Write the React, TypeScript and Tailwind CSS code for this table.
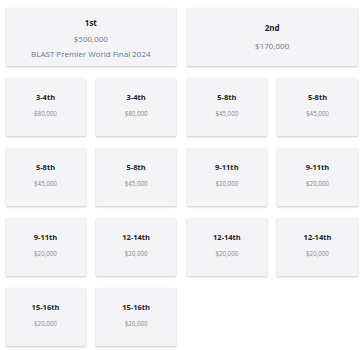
import React from "react";

const small = [
  ["3-4th", "$80,000"],
  ["3-4th", "$80,000"],
  ["5-8th", "$45,000"],
  ["5-8th", "$45,000"],
  ["5-8th", "$45,000"],
  ["5-8th", "$45,000"],
  ["9-11th", "$20,000"],
  ["9-11th", "$20,000"],
  ["9-11th", "$20,000"],
  ["12-14th", "$20,000"],
  ["12-14th", "$20,000"],
  ["12-14th", "$20,000"],
  ["15-16th", "$20,000"],
  ["15-16th", "$20,000"],
];

const card =
  "h-[58px] bg-[#f4f4f6] shadow-[0_1px_2px_rgba(0,0,0,0.22)] flex flex-col items-center justify-center text-center";

export default function App() {
  return (
    <div
      className="w-[363px] h-[350px] bg-white overflow-hidden"
      style={{ fontFamily: '"Open Sans", "Liberation Sans", sans-serif' }}
    >
      <div className="grid grid-cols-4 gap-x-[10.67px] gap-y-3 px-[5.5px] pt-2">
        <div className={`${card} col-span-2 pt-[3px]`}>
          <div className="text-[8px] leading-[15.5px] font-bold text-[#222]">1st</div>
          <div className="text-[8px] leading-[15.5px] text-[#777]">$500,000</div>
          <div className="text-[8px] leading-[15.5px] text-[#5b7a99]">BLAST Premier World Final 2024</div>
        </div>
        <div className={`${card} col-span-2`}>
          <div className="text-[8px] leading-[18px] font-bold text-[#222]">2nd</div>
          <div className="text-[8px] leading-[18px] text-[#777]">$170,000</div>
        </div>
        {small.map(([t, p], i) => (
          <div key={i} className={`${card} pb-[3px]`}>
            <div className="text-[7.5px] leading-[16.5px] font-bold text-[#222]">{t}</div>
            <div className="text-[6.2px] leading-[16.5px] text-[#888]">{p}</div>
          </div>
        ))}
      </div>
    </div>
  );
}
